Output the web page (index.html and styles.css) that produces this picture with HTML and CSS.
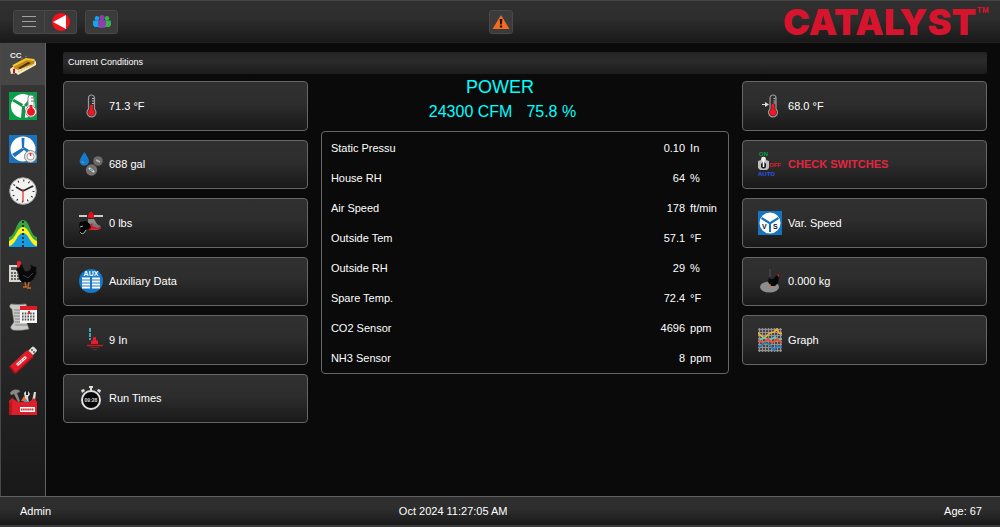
FILE: index.html
```html
<!DOCTYPE html>
<html lang="en">
<head>
    <meta charset="UTF-8">
    <meta name="viewport" content="width=device-width, initial-scale=1.0">
    <title>Catalyst - Current Conditions</title>
    <link rel="stylesheet" href="styles.css">
</head>
<body>
    <header class="header">
        <div class="header-buttons">
            <div class="btn-group">
                <button class="btn" aria-label="Menu">
                    <svg width="16" height="14" viewBox="0 0 16 14"><path d="M1 1.500h14M1 6.500h14M1 11.500h14" stroke="#a0a0a0"/></svg>
                </button>
                <button class="btn" aria-label="Back">
                    <svg width="18" height="18" viewBox="0 0 18 18"><circle cx="9" cy="9" r="9" fill="#f5121d"/><path d="M1 9L14 2v14z" fill="#fff"/></svg>
                </button>
            </div>
            <button class="btn btn-people" aria-label="Users">
                <svg width="18" height="14" viewBox="0 0 18 14">
                    <g fill="#12a5ef"><circle cx="4" cy="3.200" r="2.200"/><path d="M0 6.500q0-1 1-1h5q1 0 1 1V12H1.500L0 10z"/></g>
                    <g fill="#35b34a"><circle cx="14" cy="3.200" r="2.200"/><path d="M18 6.500q0-1-1-1h-5q-1 0-1 1V12h5.500l1.500-2z"/></g>
                    <g fill="#8c3fa8"><circle cx="9" cy="2.600" r="2.600"/><path d="M5 7q0-2 2-2h4q2 0 2 2v3l-1 1v2H6v-2l-1-1z"/></g>
                </svg>
            </button>
        </div>
        <button class="btn btn-alarm" aria-label="Alarms">
            <svg width="18" height="16" viewBox="0 0 18 16"><path d="M9 1l8.500 14H.5z" fill="#f36b22"/><path d="M7.700 5h2.600l-.5 5.500H8.200zM7.900 11.500h2.200v2H7.900z" fill="#16110e"/></svg>
        </button>
        <div class="logo">CATALYST<span class="tm">™</span></div>
    </header>

    <div class="body">
        <nav class="sidebar">
            <a href="#" class="nav-item active" aria-label="Current Conditions">
                <svg width="28" height="28" viewBox="0 0 28 28">
                    <text x="1" y="8" class="cc-text">CC</text>
                    <path d="M1 19l4-3 5 1 15-8 2 3v3L9 25l-2-2-5 1z" fill="#f4ecc8"/>
                    <path d="M4 16L17 9l9 1.500L25 14 9 20l-4-2z" fill="#c18a14"/>
                    <path d="M4 16L17 9l8 1" fill="none" stroke="#f6c52b" stroke-width="2"/>
                    <path d="M9 18l10-6 3 1-11 6z" fill="#4a3208"/>
                    <path d="M9 22l16-8" stroke="#d9b24c" stroke-dasharray="2 1"/>
                    <path d="M4 19l2-.5v4.500l-2 .5z" fill="#c8141c"/>
                    <path d="M12 9l2-1m2-1l2-1" stroke="#777"/>
                </svg>
            </a>
            <a href="#" class="nav-item" aria-label="Temperature">
                <svg width="28" height="28" viewBox="0 0 28 28">
                    <path d="M0 0h28v28H0z" fill="#0aa04a"/><circle cx="14" cy="14" r="12" fill="#fff"/>
                    <path d="M13 15L3 9l2-2 9 5zM15 13l7-8 2 2-7 8zM13 14h3v12h-4z" fill="#12964a"/>
                    <path d="M19 6a3 3 0 016 0v9a5.500 5.500 0 11-6 0z" fill="#fff" stroke="#888" stroke-width="1"/>
                    <path d="M20.500 13h3v3a4 4 0 11-3 0z" fill="#ee1620"/><path d="M22 6h3M22 9h3" stroke="#777"/>
                </svg>
            </a>
            <a href="#" class="nav-item" aria-label="Ventilation">
                <svg width="28" height="28" viewBox="0 0 28 28">
                    <path d="M0 0h28v28H0z" fill="#1b72be"/><circle cx="14" cy="14" r="12.500" fill="#fff"/>
                    <path d="M12.500 3h3l-.5 10h-2zM13 13l2 2L6 22l-3-3zM14 14l1-2 10 6-2 4z" fill="#1b72be"/>
                    <circle cx="21.500" cy="21.500" r="6" fill="#e8e8e8" stroke="#888"/><circle cx="21.500" cy="21.500" r="3.500" fill="#fff" stroke="#999"/><path d="M21.500 18v3" stroke="#e22" stroke-width="1.500"/>
                </svg>
            </a>
            <a href="#" class="nav-item" aria-label="Clock">
                <svg width="28" height="28" viewBox="0 0 28 28">
                    <circle cx="14" cy="14" r="13.300" fill="#f3f3f1" stroke="#a8a8a8"/>
                    <circle cx="14" cy="14" r="10.500" fill="none" stroke="#222" stroke-width="2" stroke-dasharray="1 4.498"/>
                    <path d="M14 14L7 10M14 14l10-5" stroke="#222" stroke-width="1.500"/><path d="M14 12v13" stroke="#e8232e" stroke-width="1.200"/>
                </svg>
            </a>
            <a href="#" class="nav-item" aria-label="Curves">
                <svg width="28" height="28" viewBox="0 0 28 28">
                    <path d="M0 18C7 17 7 1 14 1s7 16 14 17v10H0z" fill="#38a446"/>
                    <path d="M0 22C7 20 8 8 14 8s7 12 14 14v6H0z" fill="#fdf21a"/>
                    <path d="M0 27c7-1 8-13 14-13s7 12 14 13v1H0z" fill="#159be0"/>
                    <path d="M14 2v26" stroke="#111" stroke-width="1.500" stroke-dasharray="2 2"/>
                </svg>
            </a>
            <a href="#" class="nav-item" aria-label="Flock">
                <svg width="28" height="28" viewBox="0 0 28 28">
                    <path d="M0 4h12v17H0z" fill="#d8d4cf"/><path d="M2 6h8v3H2z" fill="#555"/>
                    <path d="M2 12h8M2 15h8M2 18h8" stroke="#666" stroke-width="2" stroke-dasharray="2 1"/>
                    <path d="M10 4q3-3 4 2l2 4q4 1 6-3l-1-4 3 2 4 1-1 4 1 2-4 7-5 3h-5l-4-4-1-7-2-2z" fill="#090909" stroke="#303030" stroke-width=".5"/>
                    <path d="M8 3q-1-3 2-3 3 0 2 3l-2 4-2-1z" fill="#e62432"/>
                    <path d="M16 21l1 5m3-5l-1 5m-5 0h4m0 1h4" stroke="#c76925" stroke-width="1.300"/>
                    <path d="M14 14l5 3 5-5" fill="none" stroke="#384048"/>
                </svg>
            </a>
            <a href="#" class="nav-item" aria-label="History">
                <svg width="28" height="28" viewBox="0 0 28 28">
                    <path d="M2 1q7 1 15 0l1 5v15l2 5q-8 2-16 1-4-2-1-5l2-3L3 6Q-1 4 2 1z" fill="#c9c9c6" stroke="#888" stroke-width=".6"/>
                    <path d="M5 7h12M5 10h12M5 13h12M6 16h12M6 19h12M6 22h12" stroke="#858585"/>
                    <path d="M11 4h17v16H11z" fill="#f6f6f6"/><path d="M11 3h17v4H11z" fill="#df1a25"/>
                    <path d="M13 10.500h13M13 13.500h13M13 16.500h13" stroke="#555" stroke-width="1.800" stroke-dasharray="1.600 1.100"/><path d="M19 8h2v3h-2z" fill="#e22"/>
                </svg>
            </a>
            <a href="#" class="nav-item" aria-label="USB">
                <svg width="28" height="28" viewBox="0 0 28 28">
                    <path d="M19 5l4-4q1-1 2 0l3 3q0 1-1 2l-4 4z" fill="#dedede"/><path d="M22 4l1-1 1 1-1 1zM24 6l1-1 1 1-1 1z" fill="#222"/>
                    <path d="M1 20L17 5q2-1 4 1l3 3q1 2-1 3L7 27q-2 1-3-1l-3-4q-1-1 0-2z" fill="#e21c29"/>
                    <path d="M1 21l5 6 1 0L24 11" fill="none" stroke="#92131b" stroke-width="1.500"/>
                    <path d="M8 19l9-8" stroke="#fff" stroke-width="3"/><path d="M8.500 18.500l8-7" stroke="#b9292e" stroke-dasharray="1.500 .7"/>
                </svg>
            </a>
            <a href="#" class="nav-item" aria-label="Tools">
                <svg width="28" height="28" viewBox="0 0 28 28">
                    <path d="M1 5q3-5 9-3l1 2-3 1 3 8-2 1-4-8-3 1z" fill="#8a8683"/>
                    <path d="M15 5l2-2v4h2V3l2 3-2 3 1 7h-3zM23 13l2-9h2l-1 9z" fill="#ddd"/><path d="M12 13l3-5 4 6z" fill="#f36c30"/><path d="M17 11l3 4h-6z" fill="#2aa6d6"/>
                    <path d="M0 13l3-3 6 4h11l5-4 3 4v13H0z" fill="#dc1f2b"/>
                    <path d="M0 15l3-3v15H0z" fill="#b51620"/><path d="M11 19h15v5H11z" fill="#fff"/><path d="M12 21.500h13" stroke="#cc2029" stroke-width="2" stroke-dasharray="1.500 .6"/>
                </svg>
            </a>
        </nav>

        <main class="content">
            <h1 class="page-title">Current Conditions</h1>
            <div class="columns">
                <div class="cards">
                    <button class="card">
                        <svg width="24" height="24" viewBox="0 0 24 24">
                            <path d="M9.500 4a3 3 0 016 0v11a4.500 4.500 0 11-6 0z" fill="#303030" stroke="#999" stroke-width="1.200"/>
                            <path d="M11 11h3v4.500a3.300 3.300 0 11-3 0z" fill="#f5141f"/><path d="M13 4.500h2M13 7h2M13 9.500h2" stroke="#bbb"/>
                        </svg>
                        <span>71.3 °F</span>
                    </button>
                    <button class="card">
                        <svg width="24" height="24" viewBox="0 0 24 24">
                            <path d="M5.500 0Q10 7 10 9a4.700 4.700 0 01-9.400 0Q.6 7 5.500 0z" fill="#177ac9"/><path d="M3 9q0 2 2 2" stroke="#59a9e2" fill="none"/>
                            <circle cx="19" cy="9" r="4.800" fill="#6e6866"/><path d="M17 8l4 2" stroke="#bbb" stroke-width="1.500"/>
                            <circle cx="12.500" cy="18" r="5.700" fill="#77706d"/><path d="M10 16l5 4" stroke="#d5e9f2" stroke-width="2"/><path d="M11 17l3 2" stroke="#258ab7"/>
                        </svg>
                        <span>688 gal</span>
                    </button>
                    <button class="card">
                        <svg width="24" height="24" viewBox="0 0 24 24">
                            <path d="M0 5h8M15 5h9" stroke="#ccc" stroke-width="1.800"/><path d="M9 7V4l2-3h2l2 3v3z" fill="#e2101c"/>
                            <path d="M9 8h6l3 5 4 4q-1 2-10 2l-3-4z" fill="#8c8888"/><path d="M10 15l3-3 4 3 5 1v2l-12 1z" fill="#df1422"/><path d="M14 12l8 3-3 2-6-2z" fill="#777"/>
                            <path d="M0 15l1-4 6-1 4 3 1 4-6 2-1 4-3 1-2-3 2-2z" fill="#050505"/><path d="M1 16l3-1M1 21l2 2 2-1 2-3" fill="none" stroke="#aaa"/>
                        </svg>
                        <span>0 lbs</span>
                    </button>
                    <button class="card">
                        <svg width="24" height="24" viewBox="0 0 24 24">
                            <circle cx="12" cy="12" r="12" fill="#1679c5"/><text x="12" y="7" class="aux-text">AUX</text>
                            <path d="M3 9.500h8M3 12.500h8M3 15.500h8M3 18.500h8M13 9.500h8M13 12.500h8M13 15.500h8M13 18.500h8" stroke="#fff" stroke-width="1.800"/>
                        </svg>
                        <span>Auxiliary Data</span>
                    </button>
                    <button class="card">
                        <svg width="24" height="24" viewBox="0 0 24 24">
                            <path d="M11 0v12" stroke="#4fc4dc" stroke-width="1.600" stroke-dasharray="4 1"/>
                            <path d="M12 16v-3l2-1v-3h3v3l2 1v3z" fill="#e2202b"/><path d="M8 17.500h16" stroke="#bd1d27" stroke-width="1.500"/><path d="M11 19.500h9M14 21.500h4" stroke="#77212a"/>
                        </svg>
                        <span>9 In</span>
                    </button>
                    <button class="card">
                        <svg width="24" height="24" viewBox="0 0 24 24">
                            <path d="M10 0h4v2h-1v3h-2V2h-1zM2 4l3-1 1 2-3 2zM22 4l-3-1-1 2 3 2z" fill="#ddd"/>
                            <circle cx="12" cy="14" r="9" fill="#070707" stroke="#e0e0e0" stroke-width="2"/><text x="12" y="16" class="watch-text">09:28</text>
                        </svg>
                        <span>Run Times</span>
                    </button>
                </div>

                <section class="status">
                    <div class="mode">POWER</div>
                    <div class="airflow"><span>24300 CFM</span><span>75.8 %</span></div>
                    <div class="readings">
                        <table>
                            <tr><th scope="row"><span>Static Pressu</span></th><td class="value">0.10</td><td class="unit">In</td></tr>
                            <tr><th scope="row"><span>House RH</span></th><td class="value">64</td><td class="unit">%</td></tr>
                            <tr><th scope="row"><span>Air Speed</span></th><td class="value">178</td><td class="unit">ft/min</td></tr>
                            <tr><th scope="row"><span>Outside Tem</span></th><td class="value">57.1</td><td class="unit">°F</td></tr>
                            <tr><th scope="row"><span>Outside RH</span></th><td class="value">29</td><td class="unit">%</td></tr>
                            <tr><th scope="row"><span>Spare Temp.</span></th><td class="value">72.4</td><td class="unit">°F</td></tr>
                            <tr><th scope="row"><span>CO2 Sensor</span></th><td class="value">4696</td><td class="unit">ppm</td></tr>
                            <tr><th scope="row"><span>NH3 Sensor</span></th><td class="value">8</td><td class="unit">ppm</td></tr>
                        </table>
                    </div>
                </section>

                <div class="cards">
                    <button class="card">
                        <svg width="24" height="24" viewBox="0 0 24 24">
                            <path d="M4 10.500h4" stroke="#ddd"/><path d="M7 8l4 2.500L7 13z" fill="#ddd"/>
                            <path d="M12 4a3 3 0 016 0v11a4.500 4.500 0 11-6 0z" fill="#303030" stroke="#999" stroke-width="1.200"/>
                            <path d="M13.500 10h3v5.500a3.300 3.300 0 11-3 0z" fill="#f5141f"/><path d="M15.500 4.500h2M15.500 7h2M15.500 9h2" stroke="#bbb"/>
                        </svg>
                        <span>68.0 °F</span>
                    </button>
                    <button class="card warning">
                        <svg width="24" height="24" viewBox="0 0 24 24">
                            <text x="1" y="4" class="switch-text" fill="#0a9c4c">ON</text><text x="11" y="15" class="switch-text" fill="#e61b24">OFF</text><text x="0" y="24" class="switch-text" fill="#2757f0">AUTO</text>
                            <path d="M0 9l3-1 1-3h3l1 3 3 1v7l-2 2H2l-2-2z" fill="#bdbdbd"/><circle cx="5.500" cy="7" r="2.300" fill="#eee"/><path d="M3 12q2.500-4 5 0v3q-2.500 3-5 0z" fill="#181818"/><path d="M5.500 9v6" stroke="#fff" stroke-width="1.600"/>
                        </svg>
                        <span>CHECK SWITCHES</span>
                    </button>
                    <button class="card">
                        <svg width="24" height="24" viewBox="0 0 24 24">
                            <path d="M0 0h24v24H0z" fill="#1675c0"/><circle cx="12" cy="12" r="10.500" fill="#fff"/>
                            <path d="M4 6l8 5 8-5 1 2-8 5v8h-2v-8L3 8z" fill="#1675c0"/><text x="4" y="18" class="vs-text">V</text><text x="15" y="18" class="vs-text">S</text>
                        </svg>
                        <span>Var. Speed</span>
                    </button>
                    <button class="card">
                        <svg width="24" height="24" viewBox="0 0 24 24">
                            <ellipse cx="11.500" cy="18" rx="9.500" ry="5.500" fill="#8d8d8d"/>
                            <path d="M12 0v8" stroke="#555"/><path d="M11 8q1 3 4 2l4-4 2 2-1 6-3 3h-4l-3-4z" fill="#080808"/><path d="M19 6l2-1v3z" fill="#ef1823"/><path d="M13 17v2h3M12 15v4" stroke="#c37b56" fill="none"/>
                        </svg>
                        <span>0.000 kg</span>
                    </button>
                    <button class="card">
                        <svg width="24" height="24" viewBox="0 0 24 24">
                            <path d="M0 0h24v24H0z" fill="#454545"/>
                            <path d="M1.500 0v24M4.500 0v24M7.500 0v24M10.500 0v24M13.500 0v24M16.500 0v24M19.500 0v24M22.500 0v24M0 1.500h24M0 4.500h24M0 7.500h24M0 10.500h24M0 13.500h24M0 16.500h24M0 19.500h24M0 22.500h24" stroke="#929292"/>
                            <g fill="none" stroke-width="1.800"><path d="M0 5l6 5 6-5 4-1 3-3 2 4 3 1" stroke="#f2ad38"/><path d="M0 13l6-3 6 2 5-3 3 3 4-1" stroke="#61c3ca"/><path d="M0 12l5 3 5-4 4 4 5-4 5 4" stroke="#e6532b"/><path d="M1 19l6-4 4 1 5 6 3-4 5 1" stroke="#267cc0"/></g>
                        </svg>
                        <span>Graph</span>
                    </button>
                </div>
            </div>
        </main>
    </div>

    <footer class="footer">
        <span>Admin</span>
        <span>Oct 2024 11:27:05 AM</span>
        <span>Age: 67</span>
    </footer>
</body>
</html>
```
FILE: styles.css
```css
* {
    box-sizing: border-box;
}
body {
    margin: 0;
    min-height: 100vh;
    display: flex;
    flex-direction: column;
    background: #0a0a0a;
    color: #fff;
    font-family: "Liberation Sans", Arial, sans-serif;
    font-size: 11px;
}
button {
    font: inherit;
    color: inherit;
    cursor: pointer;
}
svg {
    display: block;
    flex: none;
}

/* Header */
.header {
    display: grid;
    grid-template-columns: 1fr auto 1fr;
    align-items: center;
    height: 43px;
    padding: 0 11px 0 13px;
    background: linear-gradient(#303030 0%, #2d2d2d 45%, #191919 100%);
    border-top: 1px solid #454545;
    border-bottom: 1px solid #202020;
}
.header-buttons {
    display: flex;
    gap: 8px;
}
.btn-group {
    display: flex;
}
.btn {
    display: flex;
    align-items: center;
    justify-content: center;
    width: 32px;
    height: 24px;
    padding: 0;
    background: #3b3b3b;
    border: 1px solid #484848;
    border-radius: 3px;
}
.btn-group .btn:first-child {
    border-radius: 3px 0 0 3px;
}
.btn-group .btn:last-child {
    border-left: 0;
    border-radius: 0 3px 3px 0;
}
.btn-people {
    width: 33px;
}
.btn-alarm {
    width: 24px;
}
.logo {
    display: flex;
    justify-content: flex-end;
    align-items: flex-start;
    color: #d6142e;
    font-family: Inter, sans-serif;
    font-size: 36px;
    font-weight: 900;
    line-height: 36px;
}
.tm {
    font-size: 20px;
    font-weight: 700;
    line-height: 22px;
}

/* Sidebar */
.body {
    display: flex;
    flex: 1;
}
.sidebar {
    display: grid;
    grid-auto-rows: 1fr;
    align-self: stretch;
    width: 46px;
    padding-bottom: 73px;
    background: linear-gradient(#363636 0%, #303030 50%, #181818 100%);
    border-left: 1px solid #484848;
    border-right: 1px solid #626262;
}
.nav-item {
    display: flex;
    align-items: center;
    justify-content: center;
}
.nav-item.active {
    background: #464646;
}
.cc-text {
    font-size: 8px;
    font-weight: bold;
    fill: #eee;
}

/* Content */
.content {
    display: flex;
    flex: 1;
    flex-direction: column;
    padding: 9px 13px 73px 17px;
}
.page-title {
    height: 22px;
    margin: 0 0 7px;
    padding: 0 5px;
    font-size: 9px;
    font-weight: normal;
    line-height: 21px;
    background: linear-gradient(#242424 0%, #2b2b2b 40%, #1b1b1b 100%);
    border-radius: 2px;
}
.columns {
    display: grid;
    flex: 1;
    grid-template-columns: 3fr 5fr 3fr;
    gap: 13px;
}
.cards {
    display: grid;
    grid-template-rows: repeat(6, 1fr);
    gap: 9px;
}
.card {
    display: flex;
    align-items: center;
    gap: 6px;
    min-height: 48px;
    padding: 0 15px;
    background: linear-gradient(#303030 0%, #2d2d2d 45%, #191919 100%);
    border: 1px solid #666;
    border-radius: 4px;
    text-align: left;
}
.card.warning {
    color: #e2263f;
    font-weight: bold;
}
.aux-text {
    font-size: 7px;
    font-weight: bold;
    fill: #fff;
    text-anchor: middle;
}
.watch-text {
    font-size: 5px;
    font-weight: bold;
    fill: #ddd;
    text-anchor: middle;
}
.switch-text {
    font-size: 6px;
    font-weight: bold;
}
.vs-text {
    font-size: 7px;
    font-weight: bold;
    fill: #111;
}

/* Readings */
.mode {
    margin-top: -6px;
    padding-right: 50px;
    color: #00ffff;
    font-size: 18px;
    line-height: 24px;
    text-align: center;
}
.airflow {
    display: flex;
    justify-content: center;
    gap: 14px;
    margin-bottom: 6px;
    padding-right: 45px;
    color: #00ffff;
    font-size: 16px;
    line-height: 26px;
}
.readings {
    padding: 1px 9px 0;
    border: 1px solid #666;
    border-radius: 4px;
}
table {
    width: 100%;
    border-collapse: collapse;
}
th,
td {
    height: 30px;
    padding: 0;
    font-weight: normal;
    text-align: left;
}
th span {
    display: block;
    width: 65px;
    overflow: hidden;
    white-space: nowrap;
}
td.value {
    text-align: right;
}
td.unit {
    width: 34px;
    padding-left: 5px;
}

/* Footer */
.footer {
    display: grid;
    grid-template-columns: 41fr 59fr auto;
    align-items: center;
    height: 31px;
    padding: 0 18px 0 20px;
    background: linear-gradient(#303030 0%, #2d2d2d 45%, #191919 100%);
    border-top: 1px solid #606060;
    border-bottom: 2px solid #3b3b3b;
}
```
